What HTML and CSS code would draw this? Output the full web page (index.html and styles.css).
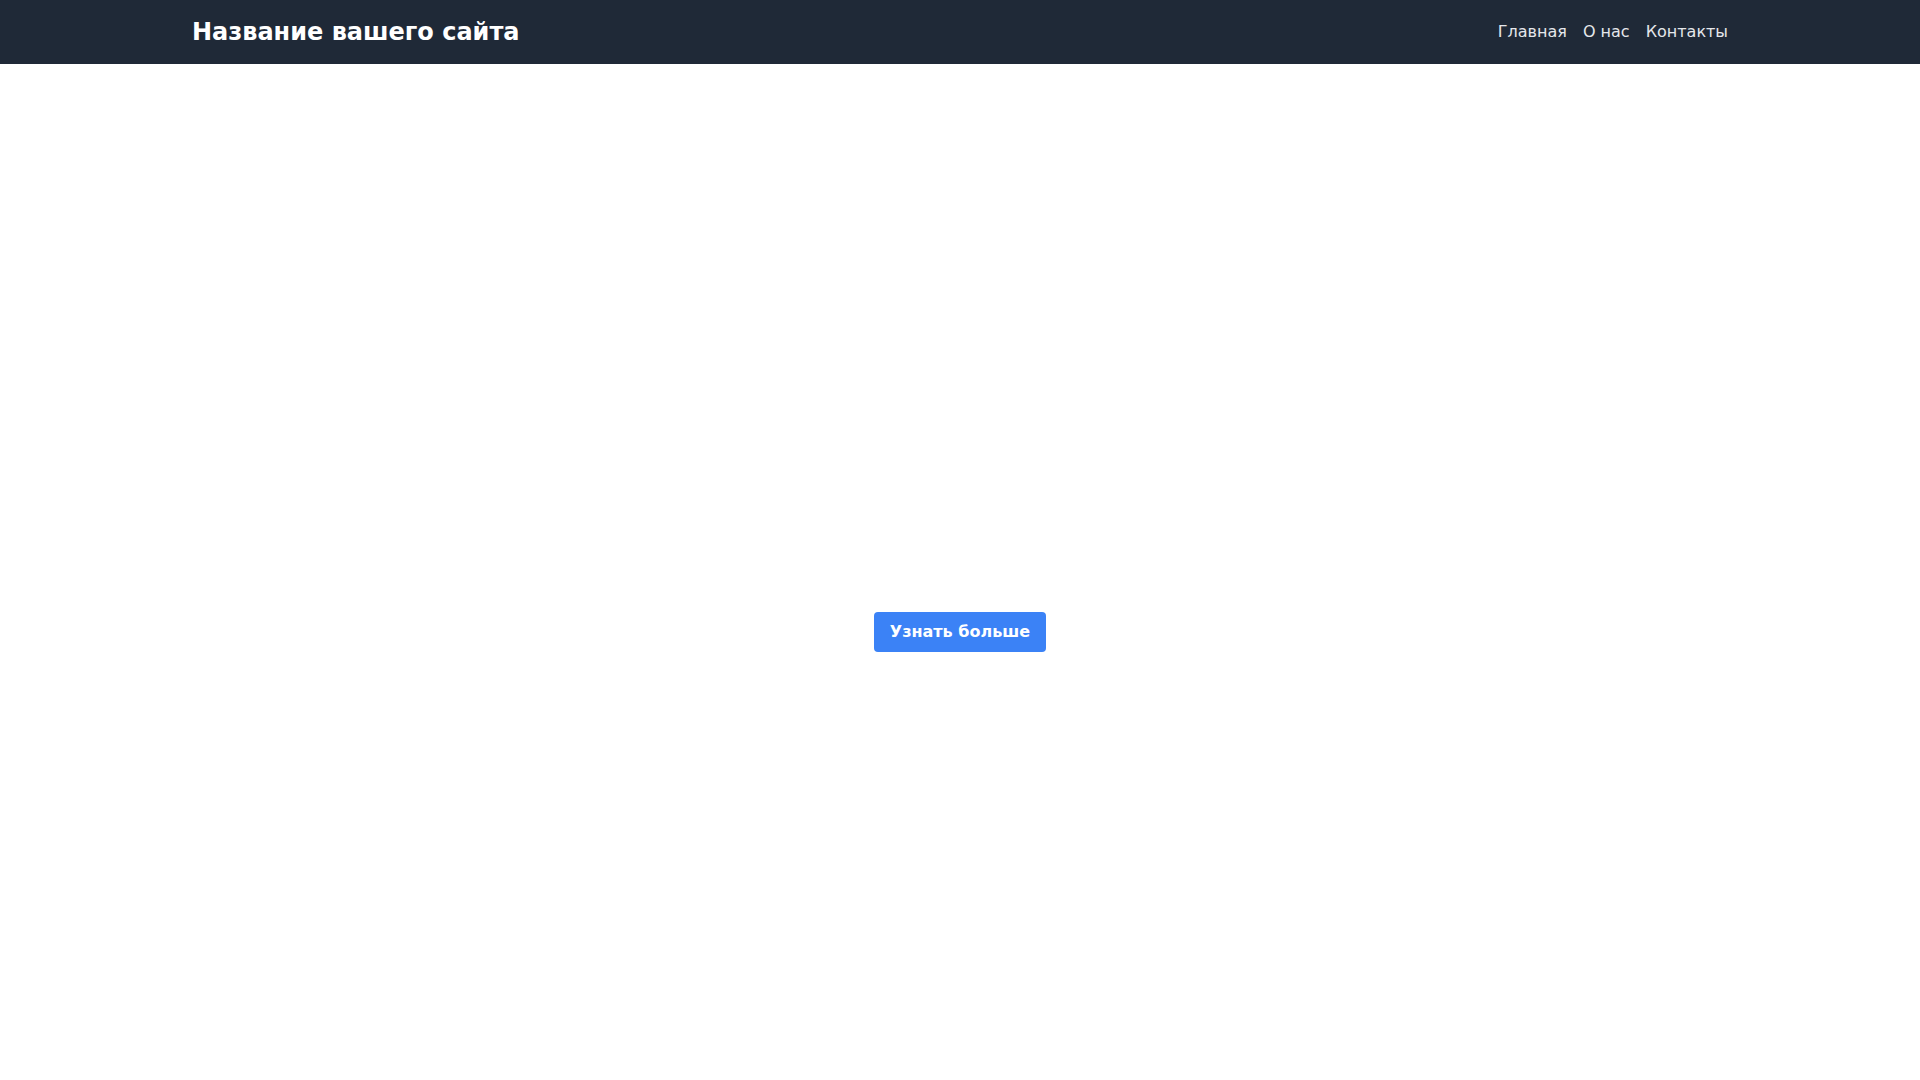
FILE: index.html
```html
<!DOCTYPE html>
<html lang="ru">
<head>
<meta charset="utf-8">
<title>Название вашего сайта</title>
<link rel="stylesheet" href="styles.css">
</head>
<body>
<header class="site-header">
  <div class="container header-inner">
    <a class="brand" href="#">Название вашего сайта</a>
    <nav class="nav">
      <a href="#">Главная</a>
      <a href="#">О нас</a>
      <a href="#">Контакты</a>
    </nav>
  </div>
</header>
<main class="hero">
  <a class="btn" href="#">Узнать больше</a>
</main>
</body>
</html>
```
FILE: styles.css
```css
* { box-sizing: border-box; }
html, body { margin: 0; padding: 0; }
body {
  font-family: "DejaVu Sans", sans-serif;
  background: #ffffff;
  color: #111827;
  height: 1080px;
  overflow: hidden;
}
a { text-decoration: none; }
.site-header {
  background: #1f2937;
  height: 64px;
}
.container {
  max-width: 1536px;
  margin: 0 auto;
}
.header-inner {
  height: 64px;
  display: flex;
  align-items: center;
  justify-content: space-between;
}
.brand {
  color: #ffffff;
  font-weight: 700;
  font-size: 24px;
  line-height: 32px;
}
.nav {
  display: flex;
  gap: 16px;
}
.nav a {
  color: #e5e7eb;
  font-size: 16px;
  line-height: 24px;
}
.hero {
  display: flex;
  justify-content: center;
  padding-top: 548px;
}
.btn {
  display: inline-block;
  background: #3b82f6;
  color: #ffffff;
  font-weight: 700;
  font-size: 16px;
  line-height: 24px;
  padding: 8px 16px;
  border-radius: 4px;
}
```
